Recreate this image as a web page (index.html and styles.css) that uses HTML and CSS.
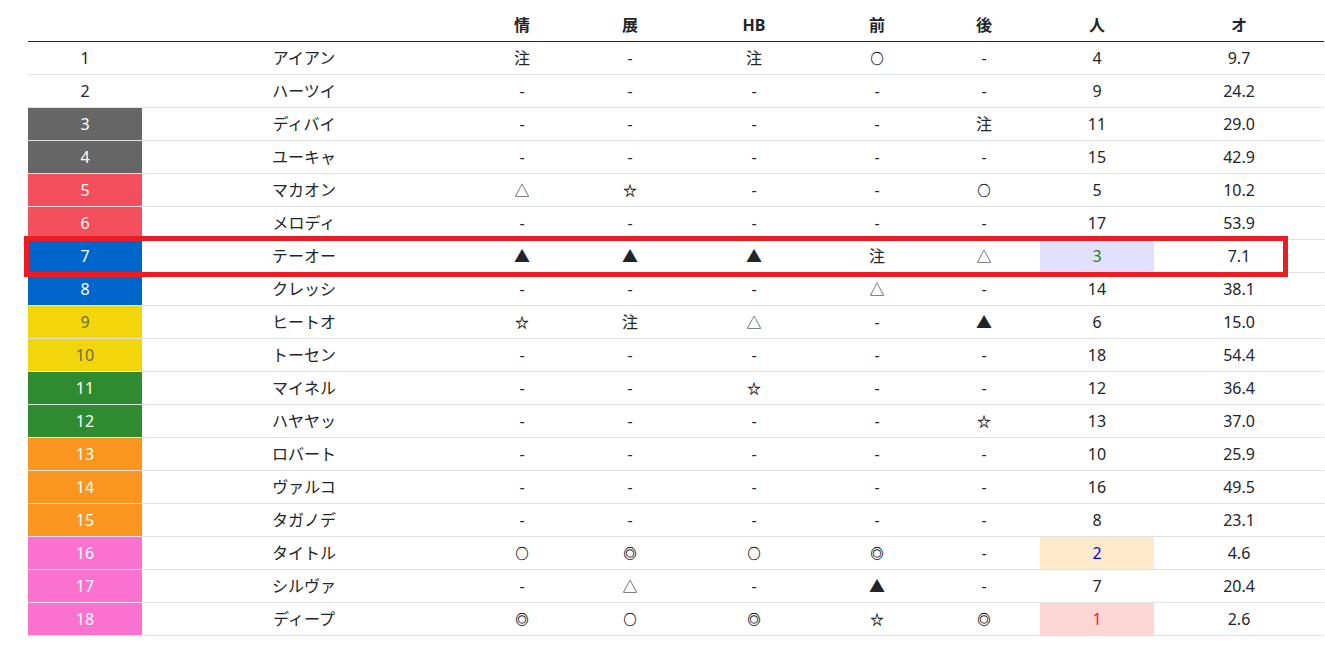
FILE: index.html
```html
<!DOCTYPE html>
<html lang="ja">
<head>
<meta charset="utf-8">
<title>予想</title>
<link rel="stylesheet" href="styles.css">
</head>
<body>
<div class="wrap">
<table class="tbl">
<colgroup>
<col class="c-no"><col class="c-name"><col class="c-a"><col class="c-b"><col class="c-c"><col class="c-d"><col class="c-e"><col class="c-f"><col class="c-g">
</colgroup>
<thead>
<tr><th></th><th></th><th>情</th><th>展</th><th>HB</th><th>前</th><th>後</th><th>人</th><th>オ</th></tr>
</thead>
<tbody>
<tr><td>1</td><td>アイアン</td><td>注</td><td>-</td><td>注</td><td class="s">○</td><td>-</td><td>4</td><td>9.7</td></tr>
<tr><td>2</td><td>ハーツイ</td><td>-</td><td>-</td><td>-</td><td>-</td><td>-</td><td>9</td><td>24.2</td></tr>
<tr><td class="f-gray">3</td><td>ディバイ</td><td>-</td><td>-</td><td>-</td><td>-</td><td>注</td><td>11</td><td>29.0</td></tr>
<tr><td class="f-gray">4</td><td>ユーキャ</td><td>-</td><td>-</td><td>-</td><td>-</td><td>-</td><td>15</td><td>42.9</td></tr>
<tr><td class="f-red">5</td><td>マカオン</td><td class="t">△</td><td class="s">☆</td><td>-</td><td>-</td><td class="s">○</td><td>5</td><td>10.2</td></tr>
<tr><td class="f-red">6</td><td>メロディ</td><td>-</td><td>-</td><td>-</td><td>-</td><td>-</td><td>17</td><td>53.9</td></tr>
<tr><td class="f-blue">7</td><td>テーオー</td><td>▲</td><td>▲</td><td>▲</td><td>注</td><td class="t">△</td><td class="p3">3</td><td>7.1</td></tr>
<tr><td class="f-blue">8</td><td>クレッシ</td><td>-</td><td>-</td><td>-</td><td class="t">△</td><td>-</td><td>14</td><td>38.1</td></tr>
<tr><td class="f-yellow">9</td><td>ヒートオ</td><td class="s">☆</td><td>注</td><td class="t">△</td><td>-</td><td>▲</td><td>6</td><td>15.0</td></tr>
<tr><td class="f-yellow">10</td><td>トーセン</td><td>-</td><td>-</td><td>-</td><td>-</td><td>-</td><td>18</td><td>54.4</td></tr>
<tr><td class="f-green">11</td><td>マイネル</td><td>-</td><td>-</td><td class="s">☆</td><td>-</td><td>-</td><td>12</td><td>36.4</td></tr>
<tr><td class="f-green">12</td><td>ハヤヤッ</td><td>-</td><td>-</td><td>-</td><td>-</td><td class="s">☆</td><td>13</td><td>37.0</td></tr>
<tr><td class="f-orange">13</td><td>ロバート</td><td>-</td><td>-</td><td>-</td><td>-</td><td>-</td><td>10</td><td>25.9</td></tr>
<tr><td class="f-orange">14</td><td>ヴァルコ</td><td>-</td><td>-</td><td>-</td><td>-</td><td>-</td><td>16</td><td>49.5</td></tr>
<tr><td class="f-orange">15</td><td>タガノデ</td><td>-</td><td>-</td><td>-</td><td>-</td><td>-</td><td>8</td><td>23.1</td></tr>
<tr><td class="f-pink">16</td><td>タイトル</td><td class="s">○</td><td class="s">◎</td><td class="s">○</td><td class="s">◎</td><td>-</td><td class="p2">2</td><td>4.6</td></tr>
<tr><td class="f-pink">17</td><td>シルヴァ</td><td>-</td><td class="t">△</td><td>-</td><td>▲</td><td>-</td><td>7</td><td>20.4</td></tr>
<tr><td class="f-pink">18</td><td>ディープ</td><td class="s">◎</td><td class="s">○</td><td class="s">◎</td><td class="s">☆</td><td class="s">◎</td><td class="p1">1</td><td>2.6</td></tr>
</tbody>
</table>
<div class="mark"></div>
</div>
</body>
</html>
```
FILE: styles.css
```css
html, body {
  margin: 0;
  padding: 0;
  background: #fff;
}
body {
  font-family: "Segoe UI", "Noto Sans", "Noto Sans CJK JP", sans-serif;
  font-size: 16px;
  color: #212529;
}
.wrap {
  position: relative;
  padding: 9px 0 0 28px;
}
.tbl {
  width: 1296px;
  border-collapse: collapse;
  table-layout: fixed;
}
.c-no { width: 114px; }
.c-name { width: 324px; }
.c-a { width: 112px; }
.c-b { width: 104px; }
.c-c { width: 144px; }
.c-d { width: 102px; }
.c-e { width: 112px; }
.c-f { width: 114px; }
.c-g { width: 170px; }
.tbl th, .tbl td {
  padding: 4px;
  height: 24px;
  line-height: 24px;
  text-align: center;
  vertical-align: middle;
  white-space: nowrap;
}
.tbl th {
  font-weight: 700;
  border-bottom: 1px solid #212529;
}
.tbl td {
  border-bottom: 1px solid #dee2e6;
}
.tbl td.s {
  font-size: 13px;
  -webkit-text-stroke: 0.3px #212529;
}
.tbl td.t {
  font-size: 15px;
}
.f-gray { background: #666666; color: #fff; }
.f-red { background: #f34e5c; color: #fff; }
.f-blue { background: #0066cc; color: #fff; }
.f-yellow { background: #f2d50b; color: #6b6b4a; }
.f-green { background: #2e8b30; color: #fff; }
.f-orange { background: #fa961f; color: #fff; }
.f-pink { background: #fb71cf; color: #fff; }
.p3 { background: #e1e1fd; color: #1e7d1e; }
.p2 { background: #fee9ca; color: #0000ff; }
.p1 { background: #fcd6d2; color: #ff1a3c; }
.mark {
  position: absolute;
  left: 24px;
  top: 236px;
  width: 1254px;
  height: 31px;
  border: 5px solid #ed1c24;
}
```
